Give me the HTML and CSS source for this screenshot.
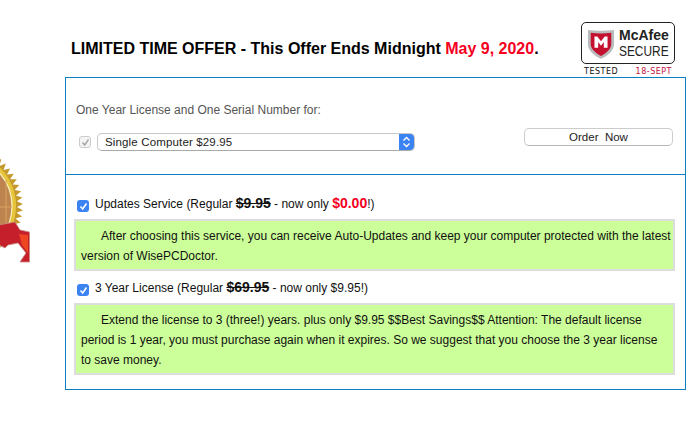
FILE: index.html
```html
<!DOCTYPE html>
<html lang="en">
<head>
    <meta charset="UTF-8">
    <title>Order</title>
    <link rel="stylesheet" href="styles.css">
</head>
<body>
<svg class="seal" width="31" height="120" viewBox="0 0 31 120">
    <polygon fill="#c49a2c" points="-40,10 1.2,9.3 -0.5,15.8 5.9,13.6 3.5,19.9 10.1,18.4 7,24.4 13.7,23.7 10.1,29.3 16.8,29.3 12.7,34.5 19.3,35.1 14.6,39.9 21.2,41.2 16,45.5 22.4,47.5 16.8,51.2 22.9,53.9 17,57 22.9,60.3 16.6,62.7 22.1,66.6 15.6,68.4 20.6,72.8 14,74 0,98 -40,100"/>
    <circle cx="-38" cy="56" r="54" fill="#e6c53d"/>
    <circle cx="-38" cy="56" r="50" fill="#bd8450" stroke="#f8f0c0" stroke-width="1.2"/>
    <path fill="none" stroke="#d9a25f" stroke-width="1" d="M0 57 L12 57 M6 30 L6 84"/>
    <path fill="#c41f2b" stroke="#c98a80" stroke-width="0.8" d="M-1 75 L15 72 L20 80 L29.5 82 L29.5 112 L20 112 L26 103 L18 93 L8 95 L5 98 L-1 95 Z"/>
    <path fill="#ee4522" d="M19 84 L28 85 L28 103 L22 95 Z"/>
</svg>
<div class="top">
    <h1 class="offer">LIMITED TIME OFFER - This Offer Ends Midnight <span class="red">May 9, 2020</span>.</h1>
    <div class="badge">
        <div class="badge-box">
            <svg class="shield" width="28" height="32" viewBox="0 0 30 34">
                <path fill="#b9bcbc" d="M1 3 C10 4 20 4 29 3 L29 18 C29 26 21 31 15 34 C9 31 1 26 1 18 Z"/>
                <path fill="#c3112f" d="M4 6 C11 7 19 7 26 6 L26 18 C26 24 20 28 15 31 C10 28 4 24 4 18 Z"/>
                <path fill="#fff" d="M8 22 L8 10 L11 10 L15 15 L19 10 L22 10 L22 22 L18 22 L18 16 L15 20 L12 16 L12 22 Z"/>
            </svg>
            <div class="badge-name">
                <span class="brand">McAfee</span>
                <span class="secure">SECURE</span>
            </div>
        </div>
        <div class="badge-date"><span>TESTED</span><span class="date">18-SEPT</span></div>
    </div>
</div>
<div class="panel">
    <div class="license">
        <p class="license-label">One Year License and One Serial Number for:</p>
        <div class="license-row">
            <span class="check check-off">
                <svg width="9" height="9" viewBox="0 0 9 9"><path fill="none" stroke="#a5a5a5" stroke-width="1.4" d="M1.5 4.5 L3.7 7 L7.5 1.5"/></svg>
            </span>
            <div class="select">
                <span class="select-text">Single Computer $29.95</span>
                <span class="select-arrows">
                    <svg width="9" height="12" viewBox="0 0 9 12"><path fill="none" stroke="#fff" stroke-width="1.4" d="M1.5 4.5 L4.5 1.5 L7.5 4.5 M1.5 7.5 L4.5 10.5 L7.5 7.5"/></svg>
                </span>
            </div>
            <button class="order">Order&nbsp; Now</button>
        </div>
    </div>
    <div class="services">
        <div class="service-head">
            <span class="check check-on">
                <svg width="9" height="9" viewBox="0 0 9 9"><path fill="none" stroke="#fff" stroke-width="1.6" d="M1.5 4.5 L3.7 7 L7.5 1.5"/></svg>
            </span>
            <span>Updates Service (Regular <b class="old">$9.95</b> - now only <b class="red big">$0.00</b>!)</span>
        </div>
        <div class="note">After choosing this service, you can receive Auto-Updates and keep your computer protected with the latest version of WisePCDoctor.</div>
        <div class="service-head second">
            <span class="check check-on">
                <svg width="9" height="9" viewBox="0 0 9 9"><path fill="none" stroke="#fff" stroke-width="1.6" d="M1.5 4.5 L3.7 7 L7.5 1.5"/></svg>
            </span>
            <span>3 Year License (Regular <b class="old">$69.95</b> - now only $9.95!)</span>
        </div>
        <div class="note">Extend the license to 3 (three!) years. plus only $9.95 $$Best Savings$$ Attention: The default license period is 1 year, you must purchase again when it expires. So we suggest that you choose the 3 year license<br>to save money.</div>
    </div>
</div>
</body>
</html>
```

FILE: styles.css
```css
body{
    margin:0;
    background-color:#fff;
    font-family:"Liberation Sans",Arial,sans-serif;
    color:#111;
    position:relative;
    height:428px;
    overflow:hidden;
}
.seal{
    position:absolute;
    left:0;
    top:150px;
}
.red{
    color:#f5001e;
}
.top{
    height:77px;
    display:flex;
    justify-content:space-between;
    padding-left:71px;
    padding-right:24px;
    box-sizing:border-box;
}
.offer{
    margin:39px 0 0 0;
    font-size:16px;
    line-height:20px;
    font-weight:bold;
    color:#000;
}
.badge{
    margin-top:22px;
    width:94px;
}
.badge-box{
    box-sizing:border-box;
    height:42px;
    border:1px solid #222;
    border-radius:5px;
    display:flex;
    align-items:center;
    gap:4px;
    padding-left:5px;
}
.shield{
    flex:none;
}
.badge-name{
    display:flex;
    flex-direction:column;
    min-width:0;
    color:#222;
}
.brand{
    font-size:14px;
    line-height:16px;
    font-weight:bold;
}
.secure{
    font-size:14px;
    line-height:16px;
    transform:scaleX(0.85);
    transform-origin:left;
}
.badge-date{
    display:flex;
    justify-content:space-between;
    margin-top:3px;
    padding:0 3px;
    font-family:"DejaVu Sans",sans-serif;
    font-size:8px;
    line-height:10px;
    letter-spacing:0.5px;
    color:#111;
}
.date{
    color:#c2103f;
}
.panel{
    margin-left:65px;
    width:621px;
    box-sizing:border-box;
    height:313px;
    border:1px solid #0b7fc0;
}
.license{
    box-sizing:border-box;
    height:97px;
    border-bottom:1px solid #0b7fc0;
    padding:17px 12px 0 10px;
}
.license-label{
    margin:0;
    font-size:12px;
    line-height:30px;
    color:#555;
}
.license-row{
    display:flex;
    align-items:center;
    margin-top:5px;
    height:24px;
}
.check{
    width:12px;
    height:12px;
    border-radius:3px;
    box-sizing:border-box;
    display:flex;
    align-items:center;
    justify-content:center;
    flex:none;
}
.check-off{
    margin-left:3px;
    border:1px solid #ccc;
    background-color:#f4f4f4;
}
.check-on{
    background-color:#3b82f2;
    margin-top:8px;
}
.select{
    margin-left:6px;
    width:318px;
    height:18px;
    box-sizing:border-box;
    border:1px solid #c8c8c8;
    border-bottom-color:#aaa;
    border-radius:5px;
    display:flex;
    justify-content:space-between;
    align-items:center;
    overflow:hidden;
    background-color:#fff;
}
.select-text{
    padding-left:7px;
    font-size:11.5px;
    letter-spacing:0.15px;
    color:#222;
}
.select-arrows{
    width:15px;
    height:18px;
    background-color:#3b82f2;
    display:flex;
    align-items:center;
    justify-content:center;
}
.order{
    margin:-11px 0 0 auto;
    width:149px;
    height:18px;
    padding:0;
    box-sizing:border-box;
    border:1px solid #ccc;
    border-bottom-color:#b5b5b5;
    border-radius:5px;
    background-color:#fff;
    font-family:"Liberation Sans",Arial,sans-serif;
    font-size:11.5px;
    color:#222;
}
.services{
    padding:17px 10px 0 8px;
}
.service-head{
    display:flex;
    gap:6px;
    font-size:12px;
    line-height:22px;
    height:27px;
    align-items:flex-start;
    padding-left:3px;
}
.service-head.second{
    margin-top:5px;
}
.old{
    text-decoration:line-through;
    font-size:14px;
}
.big{
    font-size:14px;
}
.note{
    box-sizing:border-box;
    border:2px solid #ddd;
    background-color:#ccff99;
    padding:5px 0 3px 5px;
    font-size:12px;
    line-height:20px;
    text-indent:20px;
}
```
